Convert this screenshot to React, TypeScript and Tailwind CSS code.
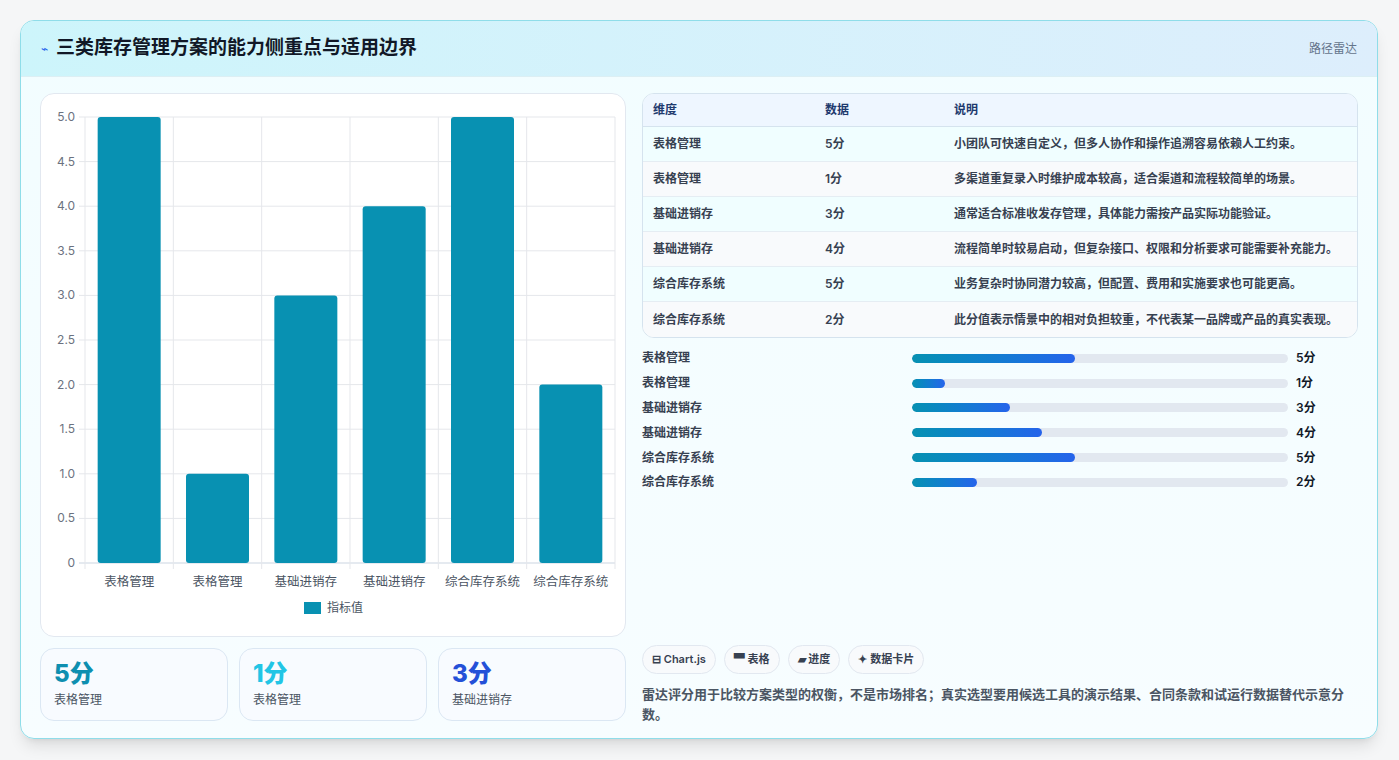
import React from "react";

const cats = ["表格管理", "表格管理", "基础进销存", "基础进销存", "综合库存系统", "综合库存系统"];
const vals = [5, 1, 3, 4, 5, 2];
const rows = [
  ["表格管理", "5分", "小团队可快速自定义，但多人协作和操作追溯容易依赖人工约束。"],
  ["表格管理", "1分", "多渠道重复录入时维护成本较高，适合渠道和流程较简单的场景。"],
  ["基础进销存", "3分", "通常适合标准收发存管理，具体能力需按产品实际功能验证。"],
  ["基础进销存", "4分", "流程简单时较易启动，但复杂接口、权限和分析要求可能需要补充能力。"],
  ["综合库存系统", "5分", "业务复杂时协同潜力较高，但配置、费用和实施要求也可能更高。"],
  ["综合库存系统", "2分", "此分值表示情景中的相对负担较重，不代表某一品牌或产品的真实表现。"],
];

function Chart() {
  const x0 = 44, x1 = 574, yT = 23, yB = 469;
  const cw = (x1 - x0) / 6;
  const ys = [0, 0.5, 1, 1.5, 2, 2.5, 3, 3.5, 4, 4.5, 5];
  const Y = (v: number) => yB - (v / 5) * (yB - yT);
  return (
    <svg width="584" height="540" className="block">
      {ys.map((v) => (
        <g key={v}>
          <line x1={x0 - 6} x2={x1} y1={Y(v)} y2={Y(v)} stroke={v === 0 ? "#cbd5e1" : "#e5e7eb"} />
          <text x={x0 - 10} y={Y(v) + 4} textAnchor="end" fontSize="12" fill="#6b7280">{v === 0 ? "0" : v.toFixed(1)}</text>
        </g>
      ))}
      {Array.from({ length: 7 }).map((_, i) => (
        <line key={i} x1={x0 + i * cw} x2={x0 + i * cw} y1={yT} y2={yB + 6} stroke="#e5e7eb" />
      ))}
      {vals.map((v, i) => {
        const bw = 63;
        const bx = x0 + i * cw + (cw - bw) / 2;
        return <rect key={i} x={bx} y={Y(v)} width={bw} height={yB - Y(v)} rx="3" fill="#0891b2" />;
      })}
      {cats.map((c, i) => (
        <text key={i} x={x0 + i * cw + cw / 2} y={492} textAnchor="middle" fontSize="12.5" fill="#4b5563">{c}</text>
      ))}
      <rect x={263} y={508} width={17} height={12} fill="#0891b2" />
      <text x={286} y={518} fontSize="12" fill="#4b5563">指标值</text>
    </svg>
  );
}

export default function App() {
  return (
    <div className="w-[1399px] h-[760px] bg-[#f5f6f7] pt-[20px] pl-[20px]" style={{ fontFamily: "Inter, 'Noto Sans CJK SC', sans-serif" }}>
      <div className="w-[1358px] h-[719px] rounded-[14px] border border-[#8fdde9] bg-gradient-to-b from-[#f2fdff] to-[#f7fdff] overflow-hidden shadow-lg flex flex-col">
        <div className="h-[56px] shrink-0 flex items-center justify-between px-[20px] bg-gradient-to-r from-[#cdf5fb] to-[#ddeefc] border-b border-[#dceff4]">
          <div className="flex items-center gap-[8px]">
            <span className="text-[#2563eb] text-[12px]">⌁</span>
            <span className="text-[19px] font-bold text-[#111827]">三类库存管理方案的能力侧重点与适用边界</span>
          </div>
          <span className="text-[12px] text-[#64748b]">路径雷达</span>
        </div>
        <div className="flex gap-[16px] px-[19px] pt-[16px]">
          <div className="w-[587px] flex flex-col gap-[11px]">
            <div className="h-[544px] rounded-[14px] border border-[#e2e8f0] bg-white">
              <Chart />
            </div>
            <div className="grid grid-cols-3 gap-[11px]">
              {[["5分", "text-[#0e8fb0]", "表格管理"], ["1分", "text-[#22c5e5]", "表格管理"], ["3分", "text-[#2450d8]", "基础进销存"]].map(([v, c, l], i) => (
                <div key={i} className="h-[73px] rounded-[14px] border border-[#dbe7f3] bg-[#f8fbff] px-[13px] pt-[10px]">
                  <div className={`text-[24px] font-extrabold leading-[30px] ${c}`}>{v}</div>
                  <div className="text-[12px] text-[#4b5563] mt-[2px]">{l}</div>
                </div>
              ))}
            </div>
          </div>
          <div className="w-[719px] flex flex-col">
            <div className="rounded-[12px] border border-[#d5e3ee] overflow-hidden bg-white">
              <div className="flex h-[33px] items-center bg-[#eef6ff] text-[12px] font-bold text-[#1e3a6e] border-b border-[#d5e3ee]">
                <div className="w-[182px] pl-[10px]">维度</div>
                <div className="w-[129px]">数据</div>
                <div>说明</div>
              </div>
              {rows.map((r, i) => (
                <div key={i} className={`flex h-[35px] items-center text-[12px] font-semibold text-[#374151] ${i < 5 ? "border-b border-[#e5edf3]" : ""} ${i % 2 === 0 ? "bg-[#f0feff]" : "bg-[#f8fafc]"}`}>
                  <div className="w-[182px] pl-[10px]">{r[0]}</div>
                  <div className="w-[129px]">{r[1]}</div>
                  <div>{r[2]}</div>
                </div>
              ))}
            </div>
            <div className="mt-[8px] flex flex-col">
              {vals.map((v, i) => (
                <div key={i} className="h-[24.8px] flex items-center text-[12px] font-semibold text-[#374151]">
                  <div className="w-[270px]">{cats[i]}</div>
                  <div className="w-[376px] h-[9px] rounded-full bg-[#e2e8f0] overflow-hidden">
                    <div className="h-full rounded-full bg-gradient-to-r from-[#0891b2] to-[#2563eb]" style={{ width: `${(v * 32.6 / 376) * 100}%` }} />
                  </div>
                  <div className="ml-[8px] text-[#111827]">{v}分</div>
                </div>
              ))}
            </div>
            <div className="mt-[150px] flex gap-[8px]">
              {["⊟ Chart.js", "▀ 表格", "▰ 进度", "✦ 数据卡片"].map((t) => (
                <span key={t} className="h-[29px] px-[9px] flex items-center rounded-full border border-[#e2e8f0] bg-[#f8fafc] text-[11px] font-semibold text-[#374151]">{t}</span>
              ))}
            </div>
            <p className="mt-[10px] text-[13px] leading-[20px] font-semibold text-[#4b5563]">雷达评分用于比较方案类型的权衡，不是市场排名；真实选型要用候选工具的演示结果、合同条款和试运行数据替代示意分数。</p>
          </div>
        </div>
      </div>
    </div>
  );
}
